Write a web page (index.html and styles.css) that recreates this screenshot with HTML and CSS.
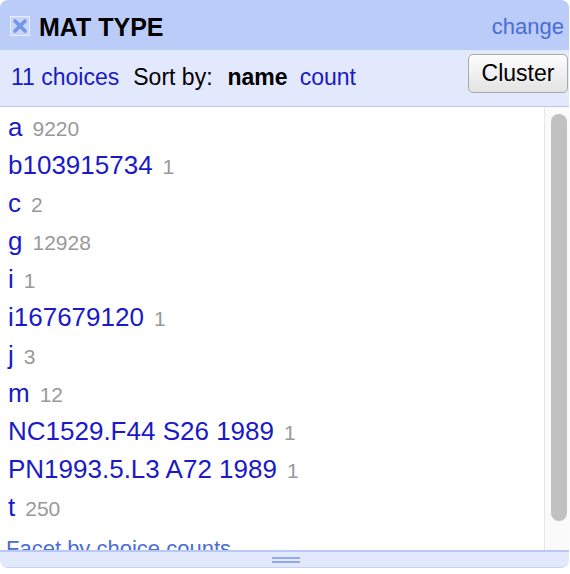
FILE: index.html
```html
<!DOCTYPE html>
<html>
<head>
<meta charset="utf-8">
<link rel="stylesheet" href="styles.css">
</head>
<body>
<div class="facet">
  <div class="title">
    <svg class="remove" width="20" height="20" viewBox="0 0 20 20">
      <rect x="0.5" y="0.5" width="19" height="19" fill="#c8d5fa" stroke="#e9eefd"/>
      <path d="M5 5 L15 15 M15 5 L5 15" stroke="#7396e6" stroke-width="3.6" stroke-linecap="round"/>
    </svg>
    <span class="name">MAT TYPE</span>
    <a class="change">change</a>
  </div>
  <div class="controls">
    <span class="choices">11 choices</span>
    <span class="sort">Sort by:</span>
    <span class="sortname">name</span>
    <a class="sortcount">count</a>
    <button class="cluster">Cluster</button>
  </div>
  <div class="body">
    <div class="list">
      <div class="item"><a>a</a><span class="count">9220</span></div>
      <div class="item"><a>b103915734</a><span class="count">1</span></div>
      <div class="item"><a>c</a><span class="count">2</span></div>
      <div class="item"><a>g</a><span class="count">12928</span></div>
      <div class="item"><a>i</a><span class="count">1</span></div>
      <div class="item"><a>i167679120</a><span class="count">1</span></div>
      <div class="item"><a>j</a><span class="count">3</span></div>
      <div class="item"><a>m</a><span class="count">12</span></div>
      <div class="item"><a>NC1529.F44 S26 1989</a><span class="count">1</span></div>
      <div class="item"><a>PN1993.5.L3 A72 1989</a><span class="count">1</span></div>
      <div class="item"><a>t</a><span class="count">250</span></div>
      <a class="facet-by">Facet by choice counts</a>
    </div>
    <div class="scrollbar"><div class="thumb"></div></div>
  </div>
  <div class="footer"><div class="grip"></div></div>
</div>
</body>
</html>
```
FILE: styles.css
```css
html, body {
  margin: 0;
  padding: 0;
  background: #fff;
}
body {
  font-family: "Liberation Sans", Arial, sans-serif;
}
.facet {
  width: 569px;
  border-radius: 8px;
  overflow: hidden;
}
.title {
  height: 50px;
  box-sizing: border-box;
  background: #bbccf9;
  display: flex;
  align-items: center;
  padding: 4px 5px 0 10px;
}
.remove {
  display: block;
  margin-top: -3px;
}
.name {
  font-size: 25px;
  font-weight: bold;
  color: #000;
  margin-left: 9px;
}
.change {
  margin-left: auto;
  font-size: 22px;
  color: #4a6cd4;
}
.controls {
  box-sizing: border-box;
  background: #e3e9fc;
  border-bottom: 1px solid #b9c9f6;
  height: 57px;
  display: flex;
  align-items: flex-start;
  padding-top: 4px;
  font-size: 23px;
  line-height: 26px;
}
.controls > span, .controls > a {
  margin-top: 10px;
}
.choices {
  margin-left: 11px;
  color: #1a1ac6;
}
.sort {
  margin-left: 14px;
  color: #000;
}
.sortname {
  margin-left: 15px;
  font-weight: bold;
  color: #000;
}
.sortcount {
  margin-left: 12px;
  color: #1a1ac6;
}
.cluster {
  margin-left: auto;
  margin-right: 1px;
  width: 100px;
  height: 39px;
  font-family: "Liberation Sans", Arial, sans-serif;
  font-size: 23px;
  color: #000;
  border: 1px solid #a9a9a9;
  border-radius: 5px;
  background: linear-gradient(#fdfdfd, #e3e3e3);
  padding: 0;
}
.body {
  height: 443px;
  display: flex;
  background: #fff;
}
.list {
  flex: 1;
  overflow: hidden;
  padding-top: 1px;
}
.item {
  padding-left: 8px;
  font-size: 26px;
  line-height: 38px;
  height: 38px;
  white-space: nowrap;
}
.item a {
  color: #1a1ac6;
}
.count {
  margin-left: 10px;
  font-size: 21px;
  line-height: 0;
  color: #999;
}
.facet-by {
  display: block;
  margin-top: 10px;
  padding-left: 6px;
  font-size: 22px;
  line-height: 26px;
  color: #4a6cd4;
  white-space: nowrap;
}
.scrollbar {
  width: 24px;
  background: #fafafa;
  border-left: 1px solid #e6e6e6;
}
.thumb {
  margin: 7px 0 0 6px;
  width: 16px;
  height: 407px;
  border-radius: 8px;
  background: #c1c1c1;
}
.footer {
  height: 15px;
  background: #e3e9fc;
  border-top: 2px solid #b9c9f6;
  border-bottom: 1px solid #c6d3f8;
  border-radius: 0 0 8px 8px;
  display: flex;
  justify-content: center;
  align-items: center;
}
.grip {
  width: 28px;
  height: 2px;
  border-top: 2px solid #94a9e8;
  border-bottom: 2px solid #94a9e8;
  margin-left: 3px;
}
```
